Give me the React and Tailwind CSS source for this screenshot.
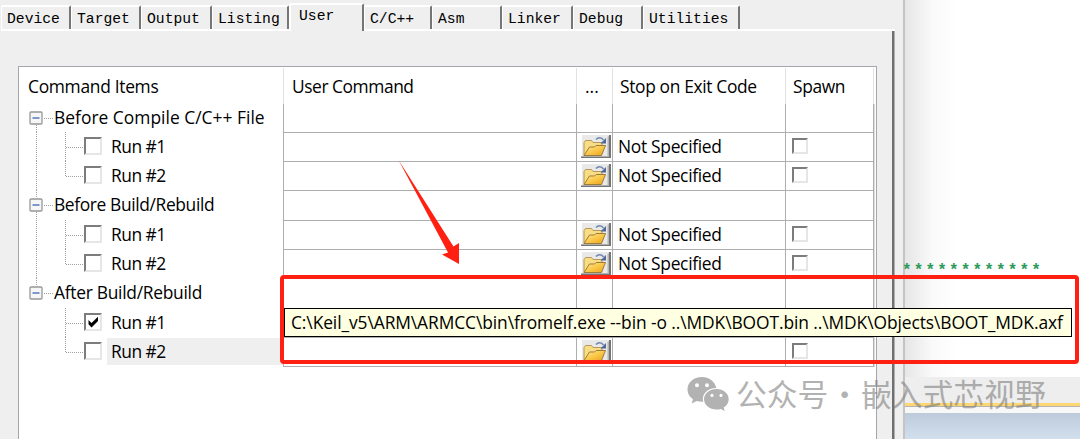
import React from 'react';

const tabs = [
  { name: 'Device', width: 'w-[70px]' },
  { name: 'Target', width: 'w-[70px]' },
  { name: 'Output', width: 'w-[71px]' },
  { name: 'Listing', width: 'w-[77px]' },
  { name: 'User', width: 'w-[75px]', active: true },
  { name: 'C/C++', width: 'w-[68px]' },
  { name: 'Asm', width: 'w-[70px]' },
  { name: 'Linker', width: 'w-[71px]' },
  { name: 'Debug', width: 'w-[70px]' },
  { name: 'Utilities', width: 'w-[97px]' },
];

const rows = [
  { label: 'Before Compile C/C++ File', group: true, first: true, tracking: 'tracking-[0.02px]' },
  { label: 'Run #1', stop: 'Not Specified' },
  { label: 'Run #2', stop: 'Not Specified', last: true },
  { label: 'Before Build/Rebuild', group: true, tracking: 'tracking-[-0.37px]' },
  { label: 'Run #1', stop: 'Not Specified' },
  { label: 'Run #2', stop: 'Not Specified', last: true },
  { label: 'After Build/Rebuild', group: true, end: true, tracking: 'tracking-[-0.28px]' },
  { label: 'Run #1', stop: 'Not Specified', checked: true, tail: true },
  { label: 'Run #2', stop: '', last: true, tail: true, selected: true },
];

function Tab({ name, width, active }) {
  if (active) {
    return (
      <div className={`${width} h-[28px] bg-[#efefef] border-t-2 border-l-2 border-white border-r-2 border-r-[#767676] rounded-t-[2px] pl-[8px] leading-[22px]`}>
        {name}
      </div>
    );
  }
  return (
    <div className={`${width} h-[26px] border-b-2 border-white`}>
      <div className="h-[24px] border-t-2 border-l border-white border-r-2 border-r-[#767676] rounded-t-[2px] pl-[5px] leading-[24px]">
        {name}
      </div>
    </div>
  );
}

function Checkbox({ small, checked }) {
  return (
    <span className={`${small ? 'size-[16px]' : 'size-[18px]'} block shrink-0 bg-white border-2 border-t-[#7c7c7c] border-l-[#7c7c7c] border-r-[#e6e6e6] border-b-[#e6e6e6]`}>
      {checked && (
        <svg viewBox="0 0 14 14" className="size-[14px]">
          <path d="M2.500 5v4.200l3 3.200 6.500-6.500V1.800L5.500 8z" fill="#000" />
        </svg>
      )}
    </span>
  );
}

function FolderButton() {
  return (
    <svg viewBox="0 0 30 24" className="w-[30px] h-[24px] block">
      <defs>
        <linearGradient id="front" x1="0" y1="0" x2="1" y2="1">
          <stop offset="0" stopColor="#ffe9a0" />
          <stop offset="0.5" stopColor="#fbc94a" />
          <stop offset="1" stopColor="#e8a01c" />
        </linearGradient>
      </defs>
      <rect x="1" y="0" width="28" height="23" fill="#e9e9e9" />
      <path d="M0 23h30V0h-2v21.5H0z" fill="#757575" />
      <path d="M26.5 2v19.5h1.5V1z" fill="#b5b5b5" />
      <path d="M3 20.5V7.500l1.500-2h6l1.500 2h9v5" fill="#f8dc86" stroke="#b39a58" strokeWidth="1" />
      <path d="M3 20.500l5.500-8.500h5l1.500-1.500h9.500l-4 10z" fill="url(#front)" stroke="#9c7c38" strokeWidth="1" />
      <path d="M15 4.500c2-2.500 5.500-2.500 7.500.5" fill="none" stroke="#7088b0" strokeWidth="1.500" />
      <path d="M25 3v5.500h-5.500z" fill="#50699a" />
    </svg>
  );
}

const dots = { stroke: '#a0a0a0', strokeWidth: 1, strokeDasharray: '1 1' };

function GroupGutter({ first, end }) {
  return (
    <svg viewBox="0 0 35 29" className="w-[35px] h-[29px] shrink-0 -mt-px">
      {!first && <line x1="17.5" y1="0" x2="17.5" y2="8" {...dots} />}
      {!end && <line x1="17.5" y1="22" x2="17.5" y2="29" {...dots} />}
      <line x1="25" y1="15.5" x2="35" y2="15.5" {...dots} />
      <rect x="11" y="9" width="12" height="12" rx="1" fill="#f6f6f6" stroke="#979797" strokeWidth="1.3" />
      <line x1="13.5" y1="15" x2="20.5" y2="15" stroke="#4b6fbb" strokeWidth="1.4" />
    </svg>
  );
}

function ItemGutter({ last, tail }) {
  return (
    <svg viewBox="0 0 65 29" className="w-[65px] h-[29px] shrink-0 -mt-px">
      {!tail && <line x1="17.5" y1="0" x2="17.5" y2="29" {...dots} />}
      <line x1="46.5" y1="0" x2="46.5" y2={last ? 15 : 29} {...dots} />
      <line x1="47" y1="15.5" x2="65" y2="15.5" {...dots} />
    </svg>
  );
}

function Row({ row }) {
  const cell = 'border-l border-b border-[#aeaeae] shrink-0 shadow-[1px_0_0_#dcdcdc]';
  return (
    <div className="flex h-[29.333px]">
      <div className="w-[264px] shrink-0 flex items-start">
        {row.group ? <GroupGutter first={row.first} end={row.end} /> : <ItemGutter last={row.last} tail={row.tail} />}
        {row.group ? (
          <span className={`${row.tracking} whitespace-nowrap leading-[26px]`}>{row.label}</span>
        ) : (
          <>
            <span className="pt-[4px]"><Checkbox checked={row.checked} /></span>
            <span className={`${row.selected ? 'bg-[#efefef]' : ''} ml-[5px] pl-[4px] flex-1 h-[27px] leading-[26px] tracking-[-0.5px]`}>{row.label}</span>
          </>
        )}
      </div>
      <div className={`${cell} w-[293px]`}></div>
      <div className={`${cell} w-[36px] pl-[4px] pt-[2px]`}>{!row.group && <FolderButton />}</div>
      <div className={`${cell} w-[173px] pl-[5px] leading-[26px] tracking-[-0.3px]`}>{!row.checked && row.stop}</div>
      <div className={`${cell} w-[89px] border-r pl-[6px] pt-[5px]`}>{!row.group && <Checkbox small />}</div>
    </div>
  );
}

function CommandTable() {
  const head = 'border-l border-[#e2e2e2] h-[35.5px] leading-[36px] shrink-0';
  return (
    <div className="w-[859px] h-[373px] ml-[18px] mt-[36px] bg-white border border-b-0 border-[#a5a5ae] text-[17.4px]">
      <div className="flex pt-[1px]">
        <div className="w-[264px] h-[35.5px] leading-[36px] pl-[9px] shrink-0 tracking-[-0.3px]">Command Items</div>
        <div className={`${head} w-[293px] pl-[8px] tracking-[-0.45px]`}>User Command</div>
        <div className={`${head} w-[36px] pl-[8px]`}>...</div>
        <div className={`${head} w-[173px] pl-[7px] tracking-[-0.35px]`}>Stop on Exit Code</div>
        <div className={`${head} w-[89px] border-r pl-[7px] tracking-[-0.4px]`}>Spawn</div>
      </div>
      {rows.map((row, i) => (
        <Row key={i} row={row} />
      ))}
    </div>
  );
}

function Editor() {
  return (
    <div className="flex-1 flex flex-col bg-linear-to-r from-[#e6e6e6] via-[#fafafa] via-16% to-white to-30%">
      <div className="h-[377px] pt-[261px] -ml-[3px] font-['Liberation_Mono',monospace] font-bold text-[16px] leading-[20px] tracking-[2.15px] text-[#2c9a58] whitespace-nowrap">
        ************
      </div>
      <div className="h-[26px] bg-[#eeeeee]"></div>
      <div className="h-[3px] bg-[#fcd773]"></div>
      <div className="h-px bg-[#b4b4b4]"></div>
      <div className="h-[6px] bg-[#f8f8f8]"></div>
      <div className="h-[26px] bg-linear-to-b from-[#bccada] to-[#d2e0ee]"></div>
    </div>
  );
}

function Watermark() {
  return (
    <div className="absolute left-[687px] top-[371px] flex items-center opacity-60 text-[#808080]">
      <svg viewBox="0 0 42 34" className="w-[42px] h-[34px] mt-[2px]">
        <path fillRule="evenodd" fill="currentColor" d="M15 0C6.5 0 .5 5.5.5 12.5c0 4 2 7.500 5.500 9.800L4.700 26.500l5-2.600c1.700.5 3.500.8 5.300.8h1.200c-2-7.800 5-13.900 13.200-13.700C28 4.500 22 0 15 0zM10 6.200a2 2 0 1 1 0 4 2 2 0 0 1 0-4zm10 0a2 2 0 1 1 0 4 2 2 0 0 1 0-4z" />
        <path fillRule="evenodd" fill="currentColor" d="M29.500 12C22.500 12 17 16.500 17 22.200s5.500 10.300 12.500 10.300c1.500 0 3-.2 4.300-.6l3.900 2.100-1-3.500c3.100-1.900 5-4.900 5-8.300C41.700 16.500 36.500 12 29.500 12zM25 16.800a1.600 1.600 0 1 1 0 3.200 1.600 1.600 0 0 1 0-3.200zm9 0a1.600 1.600 0 1 1 0 3.200 1.600 1.600 0 0 1 0-3.200z" />
      </svg>
      <span className="ml-[7px] font-['Noto_Sans_CJK_SC',sans-serif] text-[30.8px] leading-[44px] [word-spacing:-6px] whitespace-nowrap">公众号 · 嵌入式芯视野</span>
    </div>
  );
}

export default function App() {
  return (
    <div className="relative w-[1080px] h-[439px] overflow-hidden flex bg-white text-black font-['Open_Sans',sans-serif]">
      <div className="w-[905px] shrink-0 bg-[#efefef] border-r-2 border-[#c4c4c4]">
        <div className="w-[895px]">
          <div className="flex items-end pt-[3px] pl-px font-['Liberation_Mono',monospace] text-[14.7px] whitespace-nowrap">
            {tabs.map((tab) => (
              <Tab key={tab.name} {...tab} />
            ))}
            <div className="flex-1 h-[2px] bg-white"></div>
          </div>
          <div className="h-[409px] -mt-px border-r border-[#b0b0b0]">
            <div className="h-full border-r-2 border-[#707070] flow-root">
              <CommandTable />
            </div>
          </div>
        </div>
      </div>
      <Editor />

      {/* Full command tooltip */}
      <div className="absolute left-[284px] top-[308px] w-[788px] h-[29px] border border-black bg-[#ffffe1] pl-[6px] text-[17.4px] leading-[26px] tracking-[-0.09px] whitespace-nowrap">
        C:\Keil_v5\ARM\ARMCC\bin\fromelf.exe --bin -o ..\MDK\BOOT.bin ..\MDK\Objects\BOOT_MDK.axf
      </div>

      {/* Red annotation */}
      <div className="absolute left-[280px] top-[275px] w-[799px] h-[89px] border-4 border-[#ff2012] rounded-[4px]"></div>
      <svg viewBox="0 0 70 110" className="absolute left-[395px] top-[155px] w-[70px] h-[110px]">
        <path d="M3.5 5L58.5 91.5l5.500-3.500v21L47 99.500l6-2z" fill="#ff2012" />
      </svg>

      <Watermark />
    </div>
  );
}
